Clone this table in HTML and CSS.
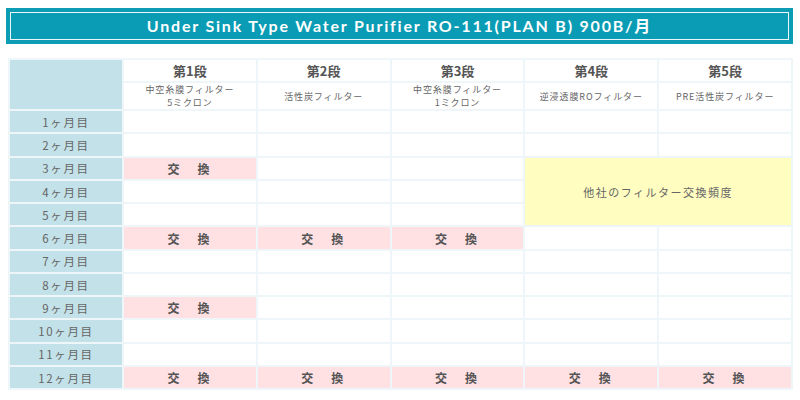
FILE: index.html
```html
<!DOCTYPE html>
<html lang="ja">
<head>
	<meta charset="utf-8">
	<title>Under Sink Type Water Purifier RO-111</title>
	<link rel="stylesheet" href="styles.css">
</head>
<body>
	<h1 class="title">Under Sink Type Water Purifier RO-111(PLAN B) 900B/月</h1>

	<table class="chart">
		<colgroup>
			<col class="col-month">
			<col><col><col><col><col>
		</colgroup>
		<tr class="stage">
			<th class="corner" rowspan="2"></th>
			<th>第1段</th>
			<th>第2段</th>
			<th>第3段</th>
			<th>第4段</th>
			<th>第5段</th>
		</tr>
		<tr class="filter">
			<td>中空糸膜フィルター<br>5ミクロン</td>
			<td>活性炭フィルター</td>
			<td>中空糸膜フィルター<br>1ミクロン</td>
			<td>逆浸透膜ROフィルター</td>
			<td>PRE活性炭フィルター</td>
		</tr>
		<tr><th class="month">1ヶ月目</th><td></td><td></td><td></td><td></td><td></td></tr>
		<tr><th class="month">2ヶ月目</th><td></td><td></td><td></td><td></td><td></td></tr>
		<tr>
			<th class="month">3ヶ月目</th>
			<td class="swap">交　換</td><td></td><td></td>
			<td class="other" rowspan="3" colspan="2">他社のフィルター交換頻度</td>
		</tr>
		<tr><th class="month">4ヶ月目</th><td></td><td></td><td></td></tr>
		<tr><th class="month">5ヶ月目</th><td></td><td></td><td></td></tr>
		<tr>
			<th class="month">6ヶ月目</th>
			<td class="swap">交　換</td><td class="swap">交　換</td><td class="swap">交　換</td><td></td><td></td>
		</tr>
		<tr><th class="month">7ヶ月目</th><td></td><td></td><td></td><td></td><td></td></tr>
		<tr><th class="month">8ヶ月目</th><td></td><td></td><td></td><td></td><td></td></tr>
		<tr><th class="month">9ヶ月目</th><td class="swap">交　換</td><td></td><td></td><td></td><td></td></tr>
		<tr><th class="month">10ヶ月目</th><td></td><td></td><td></td><td></td><td></td></tr>
		<tr><th class="month">11ヶ月目</th><td></td><td></td><td></td><td></td><td></td></tr>
		<tr>
			<th class="month">12ヶ月目</th>
			<td class="swap">交　換</td><td class="swap">交　換</td><td class="swap">交　換</td><td class="swap">交　換</td><td class="swap">交　換</td>
		</tr>
	</table>
</body>
</html>
```

FILE: styles.css
```css
body {
	margin: 0;
	padding: 8px 7px 0 6px;
	background-color: #fff;
	font-family: "Noto Sans CJK JP", "Noto Sans", sans-serif;
	color: #666;
}

.title {
	box-sizing: border-box;
	height: 36px;
	margin: 0;
	border: 4px solid #0c9db5;
	box-shadow: inset 0 0 0 1px #e9f7fa;
	background-color: #0a9cb4;
	color: #fff;
	font-family: Lato, "Noto Sans CJK JP", sans-serif;
	font-size: 16px;
	font-weight: bold;
	letter-spacing: 1.8px;
	line-height: 28px;
	text-align: center;
}

.chart {
	width: 785px;
	margin: 14px 0 0 2px;
	table-layout: fixed;
	border-collapse: separate;
	border-spacing: 2px;
	background-color: #eef6f9;
}

.col-month {
	width: 112px;
}

.chart th,
.chart td {
	padding: 0;
	background-color: #fff;
	text-align: center;
	vertical-align: middle;
}

.chart tr {
	height: 21.25px;
}

.chart .corner,
.chart .month {
	background-color: #c3e1e8;
}

.stage {
	font-size: 13px;
	font-weight: bold;
	color: #555;
}

.chart .stage {
	height: 21px;
}

.chart .filter {
	height: 26px;
}

.filter td {
	font-size: 9px;
	line-height: 13.1px;
	letter-spacing: 0.9px;
}

.month {
	font-size: 11.5px;
	font-weight: normal;
	letter-spacing: 1.6px;
	color: #666;
}

.chart .swap {
	background-color: #ffe1e4;
	font-size: 12px;
	font-weight: bold;
	letter-spacing: 3px;
	color: #555;
}

.chart .other {
	background-color: #fffdc0;
	font-size: 11px;
	letter-spacing: 1.5px;
}
```
